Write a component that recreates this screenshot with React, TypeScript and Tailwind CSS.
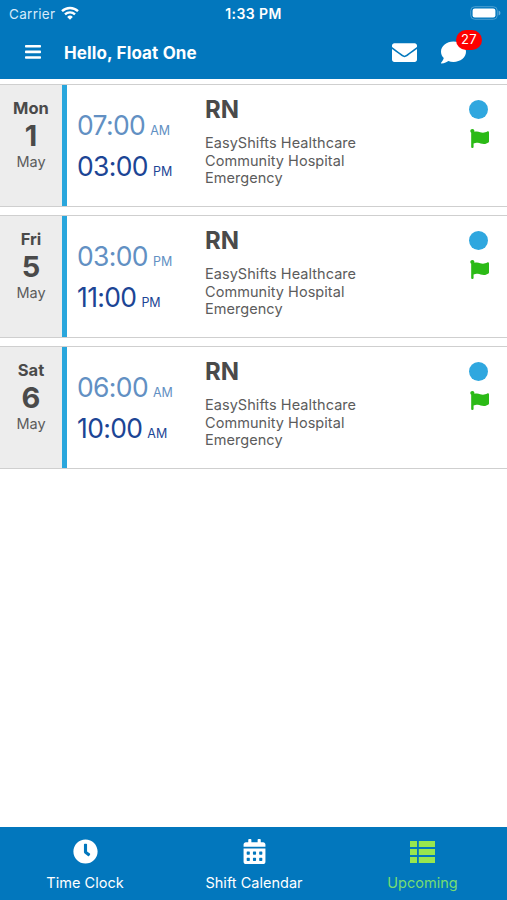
// Upcoming shifts screen.

import React from 'react';
import { FaCalendarAlt, FaClock, FaComment, FaEnvelope, FaFlag } from 'react-icons/fa';

interface Shift {
  weekday: string;
  day: number;
  month: string;
  start: string;
  startPeriod: string;
  end: string;
  endPeriod: string;
}

const SHIFTS: Shift[] = [
  { weekday: 'Mon', day: 1, month: 'May', start: '07:00', startPeriod: 'AM', end: '03:00', endPeriod: 'PM' },
  { weekday: 'Fri', day: 5, month: 'May', start: '03:00', startPeriod: 'PM', end: '11:00', endPeriod: 'PM' },
  { weekday: 'Sat', day: 6, month: 'May', start: '06:00', startPeriod: 'AM', end: '10:00', endPeriod: 'AM' },
];

export default function App() {
  return (
    <div className="flex h-[900px] w-[507px] flex-col overflow-hidden bg-white font-['Inter','Liberation_Sans',sans-serif]">
      <header className="h-[79px] shrink-0 bg-[#0277bd] text-white">
        <StatusBar />
        <TitleBar />
      </header>

      <main className="flex flex-1 flex-col gap-2 pt-[5px]">
        {SHIFTS.map(shift => (
          <ShiftCard key={shift.day} shift={shift} />
        ))}
      </main>

      <nav className="grid h-[73px] shrink-0 grid-cols-3 bg-[#0277bd] text-white">
        <Tab icon={<FaClock size={25} />} label="Time Clock" />
        <Tab icon={<FaCalendarAlt size={25} />} label="Shift Calendar" />
        <Tab icon={<ListIcon />} label="Upcoming" active />
      </nav>
    </div>
  );
}

function StatusBar() {
  return (
    <div className="grid h-[27px] grid-cols-3 items-center pl-[9px] pr-[6px] text-[13.5px]">
      <div className="flex items-center gap-[6px]">
        <span className="pt-px tracking-[0.3px] text-[#d5eafa]">Carrier</span>
        <svg className="-mt-px" width="18" height="14" viewBox="0 0 18 14" fill="none" stroke="currentColor" strokeWidth="2.4">
          <path d="M1 5.2a11.5 11.5 0 0 1 16 0" />
          <path d="M4 8.4a7.2 7.2 0 0 1 10 0" />
          <path d="M9 13.7 6.2 10.9a4 4 0 0 1 5.6 0z" fill="currentColor" stroke="none" />
        </svg>
      </div>
      <span className="pr-[3px] text-center text-[14px] font-semibold tracking-[0.4px]">1:33 PM</span>
      <svg className="-mt-px justify-self-end" width="31" height="14" viewBox="0 0 31 14">
        <rect x="0.7" y="0.7" width="26.6" height="12.6" rx="4" fill="none" stroke="#4c9fd1" />
        <rect x="2.6" y="2.5" width="22.8" height="9" rx="2.2" fill="#fff" />
        <path d="M28.6 4.6c1.3.5 1.8 1.4 1.8 2.4s-.5 1.9-1.8 2.4z" fill="#69afd9" />
      </svg>
    </div>
  );
}

function TitleBar() {
  return (
    <div className="flex h-[50px] items-center pl-[25px] pr-[41px]">
      <svg className="mr-[23px]" width="16" height="14" viewBox="0 0 16 14" fill="currentColor">
        <rect width="16" height="2.6" rx="0.8" />
        <rect y="5.6" width="16" height="2.6" rx="0.8" />
        <rect y="11.2" width="16" height="2.6" rx="0.8" />
      </svg>
      <h1 className="flex-1 pt-[3px] text-[17px] font-bold tracking-[0.13px]">Hello, Float One</h1>
      <FaEnvelope className="mt-px" size={25} />
      <div className="relative ml-6">
        <FaComment className="mt-px" size={25} />
        <span className="absolute -top-[9px] left-[15px] flex h-[20px] w-[26px] items-center justify-center rounded-full bg-[#fe0000] text-[13px] tracking-[0.3px]">
          27
        </span>
      </div>
    </div>
  );
}

function ShiftCard({ shift }: { shift: Shift }) {
  return (
    <section className="flex h-[123px] border-y border-[#cfcfcf] text-[#4a4a4a]">
      <div className="flex w-[62px] flex-col items-center bg-[#ededed] pt-[12px]">
        <span className="text-[16.5px] font-bold leading-[22px]">{shift.weekday}</span>
        <span className="text-[29px] font-bold leading-[34px]">{shift.day}</span>
        <span className="text-[14.5px] leading-[18px] text-[#5c5c5c]">{shift.month}</span>
      </div>
      <div className="w-[5px] bg-[#29a6dc]" />
      <div className="flex w-[138px] flex-col pl-[10px] pt-[21px]">
        <Time value={shift.start} period={shift.startPeriod} tone="text-[#6290c3]" />
        <Time value={shift.end} period={shift.endPeriod} tone="text-[#1c4595]" />
      </div>
      <div className="flex-1">
        <h2 className="pt-[10px] text-[24px] font-bold leading-[30px]">RN</h2>
        <p className="pt-[9px] text-[14.5px] leading-[17.6px] tracking-[0.05px] text-[#5c5c5c]">
          EasyShifts Healthcare
          <br />
          Community Hospital
          <br />
          Emergency
        </p>
      </div>
      <div className="flex w-[57px] flex-col items-center gap-[10px] pt-[15px]">
        <span className="size-[19px] rounded-full bg-[#2fa7df]" />
        <FaFlag className="ml-px" size={19} color="#2bba16" />
      </div>
    </section>
  );
}

function Time({ value, period, tone }: { value: string; period: string; tone: string }) {
  return (
    <div className={`flex h-[40.5px] items-baseline gap-[5px] ${tone}`}>
      <span className="text-[26.5px] tracking-[-0.65px]">{value}</span>
      <span className="text-[12.5px]">{period}</span>
    </div>
  );
}

function ListIcon() {
  return (
    <svg width="25" height="22" viewBox="0 0 25 22" fill="currentColor">
      <path d="M0 0h7v6H0zM8.8 0H25v6H8.800zM0 8h7v6H0zM8.800 8H25v6H8.800zM0 16h7v6H0zM8.800 16H25v6H8.800z" />
    </svg>
  );
}

function Tab({ icon, label, active }: { icon: React.ReactNode; label: string; active?: boolean }) {
  return (
    <div className={`flex flex-col items-center pt-[12px] ${active ? 'text-[#76dc72]' : 'pl-px'}`}>
      <span className={`flex h-[25px] items-center ${active ? 'text-[#98e64f]' : ''}`}>{icon}</span>
      <span className="mt-[9px] text-[14.5px] leading-[20px] tracking-[0.02px]">{label}</span>
    </div>
  );
}
